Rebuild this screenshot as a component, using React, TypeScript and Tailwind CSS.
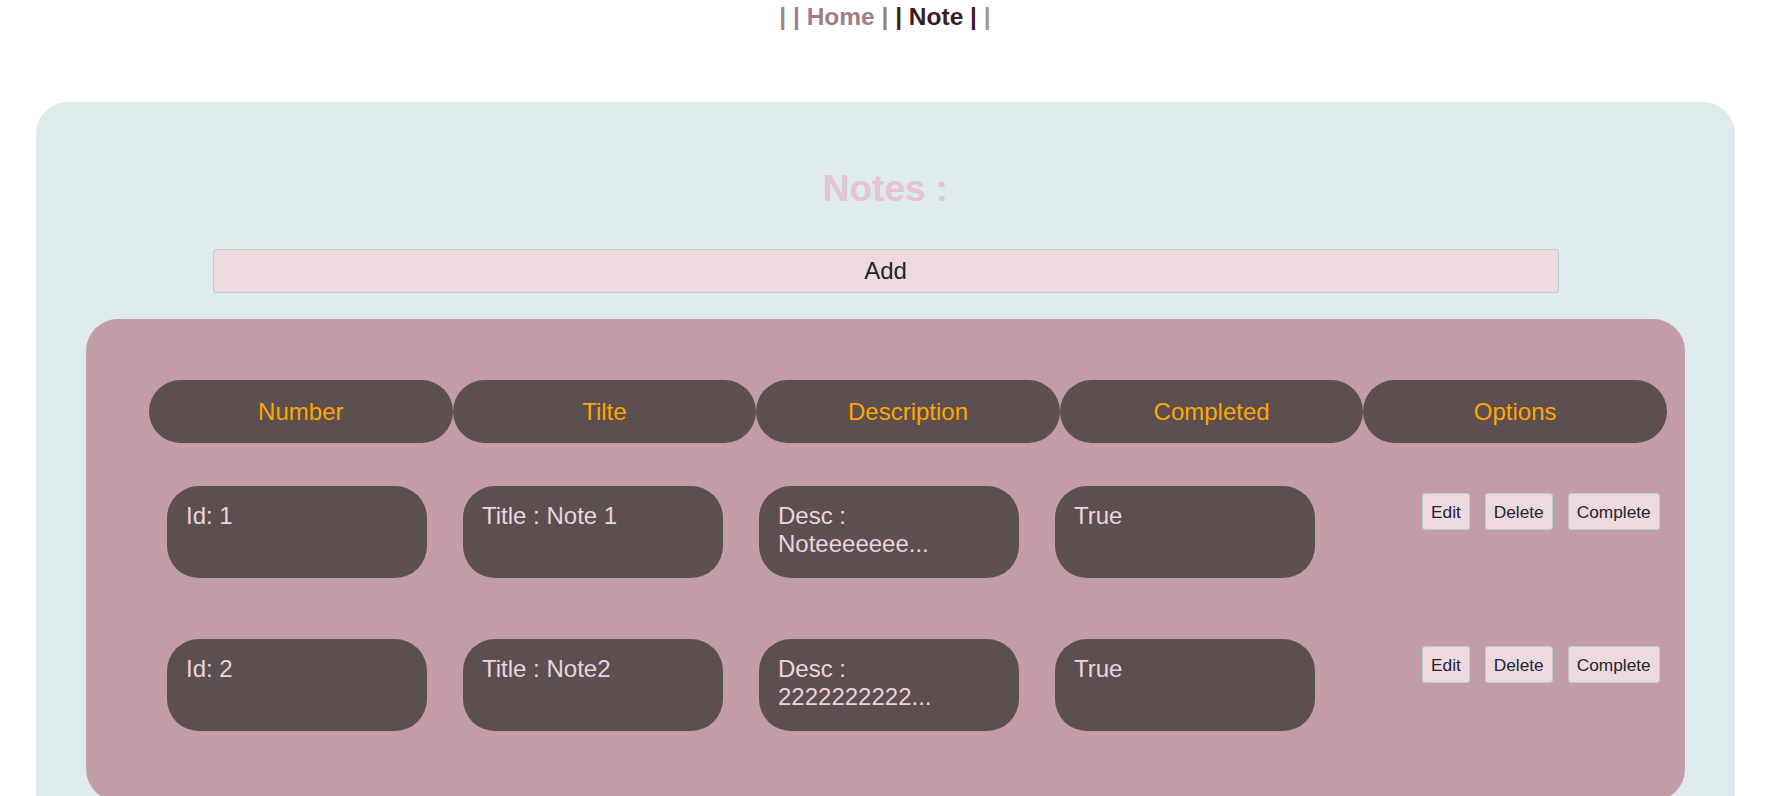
const notes = [
  { id: 1, title: "Note 1", desc: "Noteeeeeee...", completed: "True" },
  { id: 2, title: "Note2", desc: "2222222222...", completed: "True" },
];

const headers = ["Number", "Tilte", "Description", "Completed", "Options"];

function SmallButton({ label }: { label: string }) {
  return (
    <button className="h-[37px] px-[8px] text-[17.3px] leading-[20px] text-[#1f2430] bg-[#ecdadf] border border-[#b9cdd0] rounded-[3px]">
      {label}
    </button>
  );
}

function Cell({ children }: { children: React.ReactNode }) {
  return (
    <div className="w-[260px] h-[92px] mx-[18px] shrink-0 pt-[16px] px-[19px] rounded-[32px] bg-[#5c4f50] text-[#ecd3df] text-[24px] leading-[27.6px]">
      {children}
    </div>
  );
}

export default function App() {
  return (
    <div className="min-h-screen bg-white font-['Liberation_Sans',Arial,sans-serif] overflow-hidden">
      {/* NAV */}
      <nav className="h-[31px] pt-[3px] pr-[12px] text-center text-[24.5px] leading-[28px] font-bold">
        <span className="text-[#a0848c]">| </span>
        <span className="text-[#9d7f87]">| Home |</span>
        <span className="text-[#3b1c26]"> | Note |</span>
        <span className="text-[#a8949a]"> |</span>
      </nav>

      {/* OUTER CARD */}
      <div className="mt-[71px] ml-[36px] w-[1699px] bg-[#dfeaec] rounded-[32px] pt-[66px] pb-[40px]">
        <h1 className="text-center text-[37px] leading-[41px] font-bold text-[#e3c4d2]">
          Notes :
        </h1>

        <button className="block mx-auto mt-[40px] w-[1346px] h-[44px] text-[24px] text-[#1c2530] bg-[#ecdadf] border border-[#b9cdd0] rounded-[3px]">
          Add
        </button>

        {/* TABLE PANEL */}
        <div className="mt-[26px] ml-[50px] w-[1599px] bg-[#c29ca7] rounded-[32px] pt-[61px] pl-[63px] pb-[70px]">
          <div className="grid grid-cols-5 w-[1518px]">
            {headers.map((h) => (
              <div
                key={h}
                className="h-[63px] flex items-center justify-center rounded-full bg-[#5c4f50] text-[#ffa500] text-[24px]"
              >
                {h}
              </div>
            ))}
          </div>

          <div className="flex flex-col gap-[61px] mt-[43px]">
            {notes.map((n) => (
              <div key={n.id} className="flex items-start">
                <Cell>Id: {n.id}</Cell>
                <Cell>Title : {n.title}</Cell>
                <Cell>
                  <div>Desc :</div>
                  <div>{n.desc}</div>
                </Cell>
                <Cell>{n.completed}</Cell>
                <div className="flex gap-[15px] ml-[89px] mt-[7px]">
                  <SmallButton label="Edit" />
                  <SmallButton label="Delete" />
                  <SmallButton label="Complete" />
                </div>
              </div>
            ))}
          </div>
        </div>
      </div>
    </div>
  );
}
